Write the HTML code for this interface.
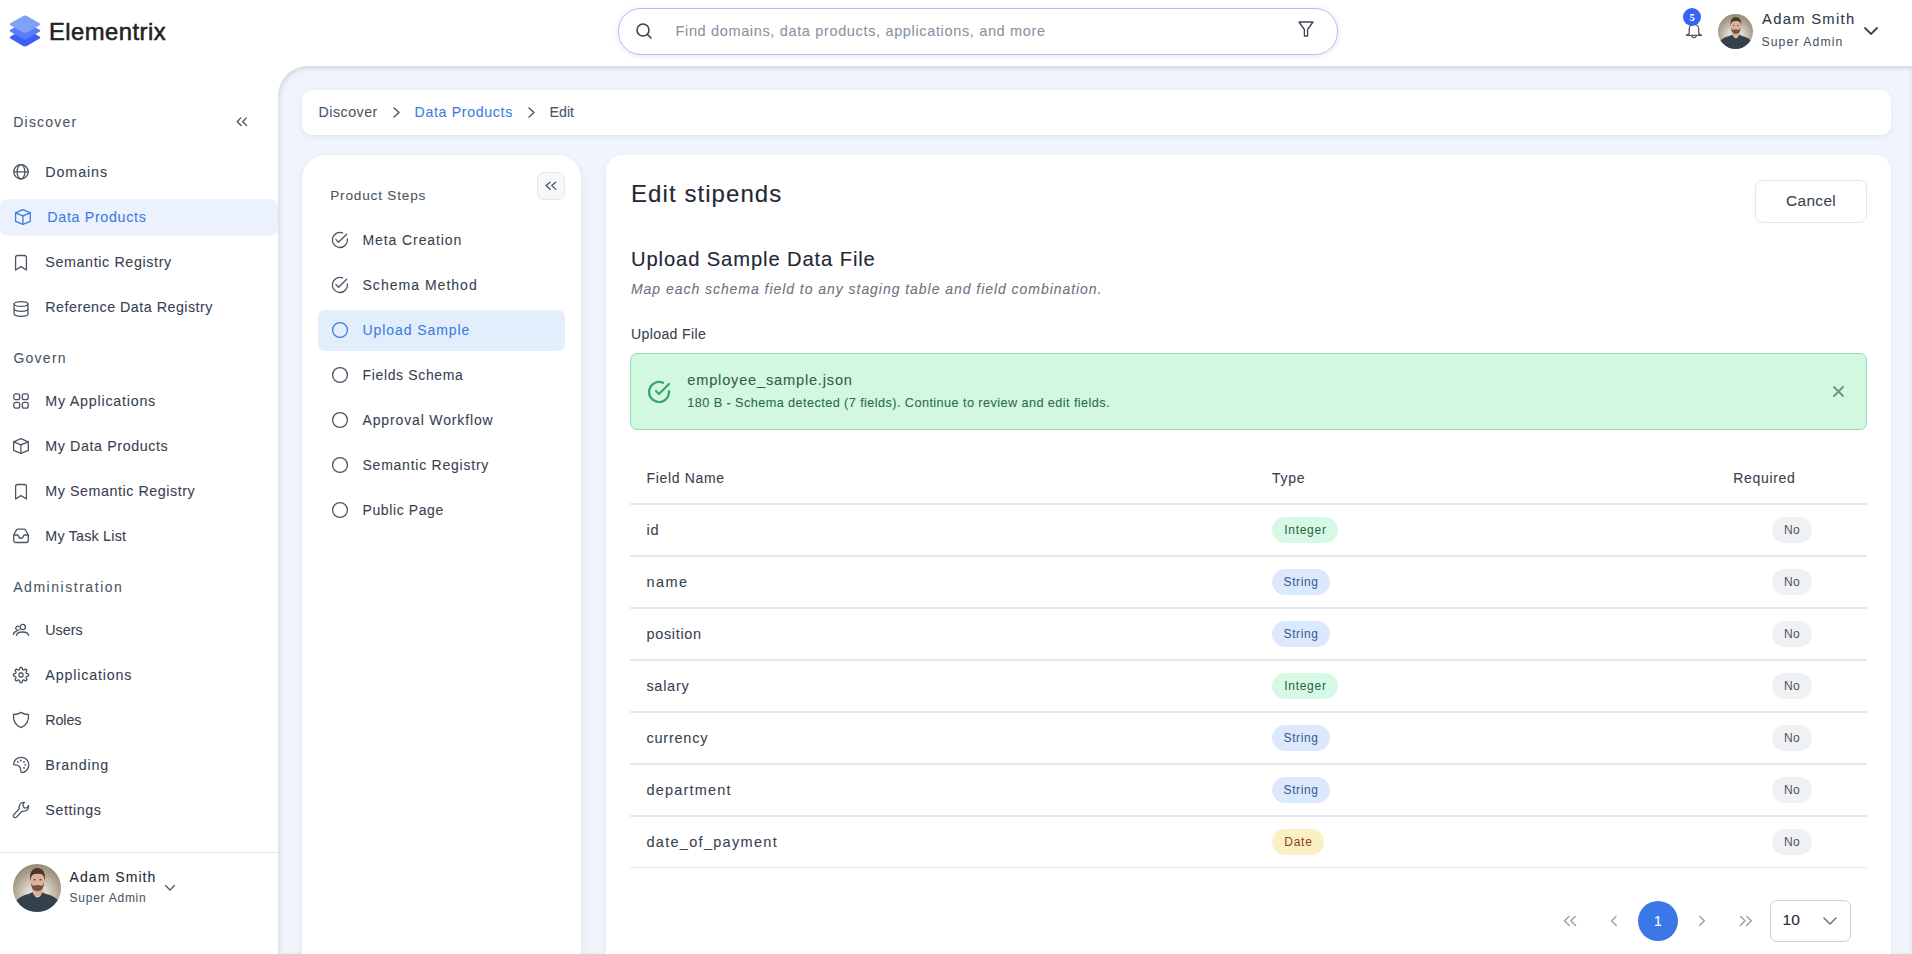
<!DOCTYPE html>
<html><head><meta charset="utf-8">
<style>
*{box-sizing:border-box;margin:0;padding:0}
html,body{width:1912px;height:954px;overflow:hidden;background:#fff;font-family:"Liberation Sans",sans-serif;color:#374151}
.abs{position:absolute}
.t{position:absolute;white-space:nowrap;line-height:1;-webkit-text-stroke:0.08px currentColor}
</style></head><body>

<div class="abs" style="left:278px;top:66px;width:1634px;height:888px;background:#f0f4fc;border-top-left-radius:30px;box-shadow:inset 1px 2px 5px rgba(40,50,80,.16)"></div>
<svg class="abs" style="left:9px;top:15px;overflow:visible" width="32" height="32" viewBox="0 0 32 32"><path transform="translate(0 13.4)" d="M13.6 1.2 Q16 -0.2 18.4 1.2 L30.6 8.2 Q32 9.2 30.6 10.2 L18.4 17.3 Q16 18.7 13.6 17.3 L1.4 10.2 Q0 9.2 1.4 8.2 Z" fill="#3e5ef5"/><path transform="translate(0 6.5)" d="M13.6 1.2 Q16 -0.2 18.4 1.2 L30.6 8.2 Q32 9.2 30.6 10.2 L18.4 17.3 Q16 18.7 13.6 17.3 L1.4 10.2 Q0 9.2 1.4 8.2 Z" fill="#5b7cf6"/><path transform="translate(0 0)" d="M13.6 1.2 Q16 -0.2 18.4 1.2 L30.6 8.2 Q32 9.2 30.6 10.2 L18.4 17.3 Q16 18.7 13.6 17.3 L1.4 10.2 Q0 9.2 1.4 8.2 Z" fill="#80a1f8"/></svg>
<div class="t" style="left:49.00px;top:20.45px;font-size:23.8px;letter-spacing:0.474px;color:#222;font-weight:400;font-style:normal;-webkit-text-stroke:0.55px #222;">Elementrix</div>
<div class="abs" style="left:618px;top:8px;width:720px;height:47px;border:1px solid #c4b5fb;border-radius:23px;background:#fff;box-shadow:0 1px 6px rgba(0,0,0,.10)"></div>
<svg class="abs" style="left:636px;top:23px;overflow:visible" width="16" height="16" viewBox="0 0 16 16" fill="none" stroke="#374151" stroke-width="1.6" stroke-linecap="round" stroke-linejoin="round" ><circle cx="7" cy="7" r="6"/><path d="M11.5 11.5 L15 15"/></svg>
<div class="t" style="left:675.50px;top:23.53px;font-size:14.5px;letter-spacing:0.652px;color:#8a91a3;font-weight:400;font-style:normal;">Find domains, data products, applications, and more</div>
<svg class="abs" style="left:1297.5px;top:21px;overflow:visible" width="16" height="16" viewBox="0 0 16 16" fill="none" stroke="#3f4652" stroke-width="1.3" stroke-linecap="round" stroke-linejoin="round" ><path d="M1 1 H15 L9.6 8.5 V15 H6.4 V8.5 Z"/></svg>
<svg class="abs" style="left:1686px;top:24px;overflow:visible" width="16" height="15" viewBox="0 0 16 15" fill="none" stroke="#4b5563" stroke-width="1.25" stroke-linecap="round" stroke-linejoin="round" ><path d="M3.2 9.6 V5 C3.2 2.2 5.3 0.4 8 0.4 C10.7 0.4 12.7 2.2 12.7 5 V9.6 L15.5 11.4 H0.4 Z"/><path d="M5.6 11.6 Q6 13.7 8 13.7 Q10 13.7 10.4 11.6"/></svg>
<div class="abs" style="left:1683px;top:8px;width:18px;height:18px;background:#3563f5;border-radius:50%"></div>
<div class="t" style="left:1689.50px;top:12.91px;font-size:10.5px;letter-spacing:0.000px;color:#fff;font-weight:700;font-style:normal;font-family:'Liberation Serif',serif;">5</div>
<div class="abs" style="left:1718px;top:14px;width:35px;height:35px;border-radius:50%;overflow:hidden;background:radial-gradient(circle at 50% 64%,#f3f0ec 0%,#dcd5cb 28%,#aa9d8c 62%,#7f705f 100%)">
<svg width="35" height="35" viewBox="0 0 48 48" style="position:absolute;left:0;top:0">
<path d="M19 20 L19.5 30 Q24 35 29.5 30 L30 20 Z" fill="#d9ae9a"/>
<path d="M2 38.5 Q6 32 15.5 30 L19.5 28.3 Q21.5 33 24.5 33.5 Q27.5 33 29.5 28.3 L33 30 Q43 32 46.5 38.5 L48 48 L0 48 Z" fill="#34414a"/>
<ellipse cx="24.5" cy="16.5" rx="6.8" ry="9" fill="#dcb19e"/>
<path d="M17.2 17 Q15.8 4.5 24.5 4 Q33 4.5 31.9 17 Q31.2 10.5 28 10 Q25 9.3 22 10 Q18 10.2 17.2 17 Z" fill="#4d362a"/>
<path d="M17.8 18 Q18 27.2 24.5 27.2 Q31 27.2 31.2 18 Q30 22.2 28.2 21.8 Q24.5 20.2 20.8 21.8 Q19 22.2 17.8 18 Z" fill="#75503e"/>
<ellipse cx="21.6" cy="15.8" rx="1" ry="0.7" fill="#3a2a22"/><ellipse cx="27.4" cy="15.8" rx="1" ry="0.7" fill="#3a2a22"/>
<ellipse cx="24.5" cy="23" rx="1.8" ry="0.7" fill="#9a5a50"/>
</svg></div>
<div class="t" style="left:1762.00px;top:12.47px;font-size:14.8px;letter-spacing:1.289px;color:#2d3748;font-weight:400;font-style:normal;">Adam Smith</div>
<div class="t" style="left:1761.50px;top:36.47px;font-size:12.2px;letter-spacing:1.104px;color:#4a5568;font-weight:400;font-style:normal;">Super Admin</div>
<svg class="abs" style="left:1864px;top:27px;overflow:visible" width="14" height="8" viewBox="0 0 14 8" fill="none" stroke="#3f4652" stroke-width="1.8" stroke-linecap="round" stroke-linejoin="round" ><path d="M1 1 L7 7 L13 1"/></svg>
<div class="t" style="left:13.20px;top:115.15px;font-size:14px;letter-spacing:1.234px;color:#4b5563;font-weight:400;font-style:normal;">Discover</div>
<svg class="abs" style="left:236px;top:117px;overflow:visible" width="12" height="10" viewBox="0 0 12 10" fill="none" stroke="#4b5563" stroke-width="1.35" stroke-linecap="round" stroke-linejoin="round" ><path d="M4.8 0.9 L1.2 4.8 L5.1 8.6"/><path d="M10.3 0.9 L6.7 4.8 L10.6 8.6"/></svg>
<div class="abs" style="left:0px;top:199px;width:278px;height:37px;background:#ebf2fd;border-radius:8px"></div>
<svg class="abs" style="left:13px;top:164px;overflow:visible" width="16" height="16" viewBox="0 0 16 16" fill="none" stroke="#4b5563" stroke-width="1.3" stroke-linecap="round" stroke-linejoin="round" ><circle cx="8" cy="7.8" r="7.2"/><ellipse cx="8" cy="7.8" rx="3.9" ry="7.2"/><path d="M0.8 7.8 H15.2"/></svg>
<div class="t" style="left:45.30px;top:164.90px;font-size:14.3px;letter-spacing:0.895px;color:#374151;font-weight:400;font-style:normal;">Domains</div>
<svg class="abs" style="left:15px;top:209px;overflow:visible" width="16" height="16" viewBox="0 0 16 16" fill="none" stroke="#3b7ddd" stroke-width="1.3" stroke-linecap="round" stroke-linejoin="round" ><path d="M7.9 0.6 L15.3 3.8 V12.3 L7.9 15.3 L0.6 12.3 V3.8 Z"/><path d="M0.6 3.8 L7.9 6.9 L15.3 3.8"/><path d="M7.9 6.9 V15.3"/></svg>
<div class="t" style="left:47.30px;top:209.90px;font-size:14.3px;letter-spacing:0.658px;color:#3b7ddd;font-weight:400;font-style:normal;">Data Products</div>
<svg class="abs" style="left:13px;top:254px;overflow:visible" width="16" height="16" viewBox="0 0 16 16" fill="none" stroke="#4b5563" stroke-width="1.3" stroke-linecap="round" stroke-linejoin="round" ><path d="M2.6 16 V3.5 Q2.6 1.5 4.6 1.5 H11.4 Q13.4 1.5 13.4 3.5 V16 L8 12.6 Z"/></svg>
<div class="t" style="left:45.30px;top:254.90px;font-size:14.3px;letter-spacing:0.617px;color:#374151;font-weight:400;font-style:normal;">Semantic Registry</div>
<svg class="abs" style="left:13px;top:299.5px;overflow:visible" width="16" height="16" viewBox="0 0 16 16" fill="none" stroke="#4b5563" stroke-width="1.3" stroke-linecap="round" stroke-linejoin="round" ><ellipse cx="8" cy="4" rx="6.9" ry="2.4"/><path d="M1.1 4 V14 A6.9 2.3 0 0 0 14.9 14 V4"/><path d="M1.1 9.1 A6.9 2.3 0 0 0 14.9 9.1"/></svg>
<div class="t" style="left:45.30px;top:299.90px;font-size:14.3px;letter-spacing:0.483px;color:#374151;font-weight:400;font-style:normal;">Reference Data Registry</div>
<div class="t" style="left:13.40px;top:350.95px;font-size:14px;letter-spacing:1.259px;color:#4b5563;font-weight:400;font-style:normal;">Govern</div>
<svg class="abs" style="left:13px;top:393px;overflow:visible" width="16" height="16" viewBox="0 0 16 16" fill="none" stroke="#4b5563" stroke-width="1.3" stroke-linecap="round" stroke-linejoin="round" ><rect x="0.8" y="0.8" width="5.9" height="5.9" rx="2"/><rect x="9.3" y="0.8" width="5.9" height="5.9" rx="2"/><rect x="0.8" y="9.3" width="5.9" height="5.9" rx="2"/><rect x="9.3" y="9.3" width="5.9" height="5.9" rx="2"/></svg>
<div class="t" style="left:45.30px;top:393.90px;font-size:14.3px;letter-spacing:0.760px;color:#374151;font-weight:400;font-style:normal;">My Applications</div>
<svg class="abs" style="left:13px;top:438px;overflow:visible" width="16" height="16" viewBox="0 0 16 16" fill="none" stroke="#4b5563" stroke-width="1.3" stroke-linecap="round" stroke-linejoin="round" ><path d="M7.9 0.6 L15.3 3.8 V12.3 L7.9 15.3 L0.6 12.3 V3.8 Z"/><path d="M0.6 3.8 L7.9 6.9 L15.3 3.8"/><path d="M7.9 6.9 V15.3"/></svg>
<div class="t" style="left:45.30px;top:438.90px;font-size:14.3px;letter-spacing:0.584px;color:#374151;font-weight:400;font-style:normal;">My Data Products</div>
<svg class="abs" style="left:13px;top:483px;overflow:visible" width="16" height="16" viewBox="0 0 16 16" fill="none" stroke="#4b5563" stroke-width="1.3" stroke-linecap="round" stroke-linejoin="round" ><path d="M2.6 16 V3.5 Q2.6 1.5 4.6 1.5 H11.4 Q13.4 1.5 13.4 3.5 V16 L8 12.6 Z"/></svg>
<div class="t" style="left:45.30px;top:483.90px;font-size:14.3px;letter-spacing:0.549px;color:#374151;font-weight:400;font-style:normal;">My Semantic Registry</div>
<svg class="abs" style="left:13px;top:528px;overflow:visible" width="16" height="16" viewBox="0 0 16 16" fill="none" stroke="#4b5563" stroke-width="1.3" stroke-linecap="round" stroke-linejoin="round" ><path d="M0.7 7 L3.6 1.8 Q4 1.2 4.8 1.2 H11.2 Q12 1.2 12.4 1.8 L15.3 7 V12.5 Q15.3 14.5 13.3 14.5 H2.7 Q0.7 14.5 0.7 12.5 Z"/><path d="M0.7 7 H4.4 Q5.1 7 5.3 7.7 Q6 10.3 8 10.3 Q10 10.3 10.7 7.7 Q10.9 7 11.6 7 H15.3"/></svg>
<div class="t" style="left:45.30px;top:528.90px;font-size:14.3px;letter-spacing:0.208px;color:#374151;font-weight:400;font-style:normal;">My Task List</div>
<div class="t" style="left:13.20px;top:580.15px;font-size:14px;letter-spacing:1.538px;color:#4b5563;font-weight:400;font-style:normal;">Administration</div>
<svg class="abs" style="left:13px;top:622px;overflow:visible" width="16" height="16" viewBox="0 0 16 16" fill="none" stroke="#4b5563" stroke-width="1.3" stroke-linecap="round" stroke-linejoin="round" ><circle cx="9.8" cy="5" r="2.6"/><path d="M3.5 13.3 C3.8 10.8 6 10 9.7 10 C13.4 10 15.2 10.8 15.5 13.3"/><path d="M5.9 4.6 A2 2 0 1 0 6.2 7.6"/><path d="M0.4 12.4 C0.8 10.5 2 9.6 3.6 9.4"/></svg>
<div class="t" style="left:45.30px;top:622.90px;font-size:14.3px;letter-spacing:-0.009px;color:#374151;font-weight:400;font-style:normal;">Users</div>
<svg class="abs" style="left:13px;top:667px;overflow:visible" width="16" height="16" viewBox="0 0 16 16" fill="none" stroke="#4b5563" stroke-width="1.3" stroke-linecap="round" stroke-linejoin="round" ><path d="M6.44 2.62 L7.05 0.46 L8.95 0.46 L9.56 2.62 L10.70 3.09 L12.66 1.99 L14.01 3.34 L12.91 5.30 L13.38 6.44 L15.54 7.05 L15.54 8.95 L13.38 9.56 L12.91 10.70 L14.01 12.66 L12.66 14.01 L10.70 12.91 L9.56 13.38 L8.95 15.54 L7.05 15.54 L6.44 13.38 L5.30 12.91 L3.34 14.01 L1.99 12.66 L3.09 10.70 L2.62 9.56 L0.46 8.95 L0.46 7.05 L2.62 6.44 L3.09 5.30 L1.99 3.34 L3.34 1.99 L5.30 3.09Z"/><rect x="6" y="6" width="4" height="4" rx="1.3"/></svg>
<div class="t" style="left:45.30px;top:667.90px;font-size:14.3px;letter-spacing:0.818px;color:#374151;font-weight:400;font-style:normal;">Applications</div>
<svg class="abs" style="left:13px;top:712px;overflow:visible" width="16" height="16" viewBox="0 0 16 16" fill="none" stroke="#4b5563" stroke-width="1.3" stroke-linecap="round" stroke-linejoin="round" ><path d="M8 0.4 C10.3 1.9 12.8 2.6 15.5 2.5 C16 8.6 13.2 13.5 8 15.6 C2.8 13.5 0 8.6 0.5 2.5 C3.2 2.6 5.7 1.9 8 0.4 Z"/></svg>
<div class="t" style="left:45.30px;top:712.90px;font-size:14.3px;letter-spacing:-0.116px;color:#374151;font-weight:400;font-style:normal;">Roles</div>
<svg class="abs" style="left:13px;top:757px;overflow:visible" width="16" height="16" viewBox="0 0 16 16" fill="none" stroke="#4b5563" stroke-width="1.3" stroke-linecap="round" stroke-linejoin="round" ><path d="M0.6 7.4 C0.8 3.2 4 0.3 8 0.3 C12.5 0.3 15.8 3.6 15.8 7.8 C15.8 12 12.5 15.6 8.8 15.6 C7.8 15.6 8 14.5 7.8 13 C7.5 9.5 5.5 8 2 7.9 C1 7.9 0.6 7.7 0.6 7.4 Z"/><g fill="#4b5563" stroke="none"><circle cx="4.8" cy="4.9" r="0.9"/><circle cx="7.9" cy="3.5" r="0.9"/><circle cx="11" cy="4.9" r="0.9"/><circle cx="12.3" cy="7.9" r="0.9"/><circle cx="11" cy="10.9" r="0.9"/></g></svg>
<div class="t" style="left:45.30px;top:757.90px;font-size:14.3px;letter-spacing:0.822px;color:#374151;font-weight:400;font-style:normal;">Branding</div>
<svg class="abs" style="left:13px;top:802px;overflow:visible" width="16" height="16" viewBox="0 0 16 16" fill="none" stroke="#4b5563" stroke-width="1.3" stroke-linecap="round" stroke-linejoin="round" ><path d="M6.2 6.9 C5.5 4 7 0.8 10.3 0.4 L11.5 0.4 L10.3 1.8 C9.4 3.6 10.6 6 12.5 6.2 C13.6 6.3 14.6 5.6 15.5 3.6 L15.6 4.5 C15.7 8 13 9.6 9.1 9.3 L3.5 15.1 C2.8 15.8 1.4 15.6 0.8 15 C0.2 14.3 0.2 13.2 0.9 12.5 Z"/></svg>
<div class="t" style="left:45.30px;top:802.90px;font-size:14.3px;letter-spacing:0.548px;color:#374151;font-weight:400;font-style:normal;">Settings</div>
<div class="abs" style="left:0px;top:852px;width:278px;height:1px;background:#e3e6ec"></div>
<div class="abs" style="left:13px;top:864px;width:48px;height:48px;border-radius:50%;overflow:hidden;background:radial-gradient(circle at 50% 64%,#f3f0ec 0%,#dcd5cb 28%,#aa9d8c 62%,#7f705f 100%)">
<svg width="48" height="48" viewBox="0 0 48 48" style="position:absolute;left:0;top:0">
<path d="M19 20 L19.5 30 Q24 35 29.5 30 L30 20 Z" fill="#d9ae9a"/>
<path d="M2 38.5 Q6 32 15.5 30 L19.5 28.3 Q21.5 33 24.5 33.5 Q27.5 33 29.5 28.3 L33 30 Q43 32 46.5 38.5 L48 48 L0 48 Z" fill="#34414a"/>
<ellipse cx="24.5" cy="16.5" rx="6.8" ry="9" fill="#dcb19e"/>
<path d="M17.2 17 Q15.8 4.5 24.5 4 Q33 4.5 31.9 17 Q31.2 10.5 28 10 Q25 9.3 22 10 Q18 10.2 17.2 17 Z" fill="#4d362a"/>
<path d="M17.8 18 Q18 27.2 24.5 27.2 Q31 27.2 31.2 18 Q30 22.2 28.2 21.8 Q24.5 20.2 20.8 21.8 Q19 22.2 17.8 18 Z" fill="#75503e"/>
<ellipse cx="21.6" cy="15.8" rx="1" ry="0.7" fill="#3a2a22"/><ellipse cx="27.4" cy="15.8" rx="1" ry="0.7" fill="#3a2a22"/>
<ellipse cx="24.5" cy="23" rx="1.8" ry="0.7" fill="#9a5a50"/>
</svg></div>
<div class="t" style="left:69.60px;top:870.15px;font-size:14px;letter-spacing:1.051px;color:#1f2937;font-weight:400;font-style:normal;">Adam Smith</div>
<div class="t" style="left:69.60px;top:891.84px;font-size:12px;letter-spacing:0.739px;color:#4b5563;font-weight:400;font-style:normal;">Super Admin</div>
<svg class="abs" style="left:165px;top:885px;overflow:visible" width="10" height="6" viewBox="0 0 10 6" fill="none" stroke="#4b5563" stroke-width="1.3" stroke-linecap="round" stroke-linejoin="round" ><path d="M0.5 0.5 L5 5 L9.5 0.5"/></svg>
<div class="abs" style="left:302px;top:90px;width:1589px;height:45px;background:#fff;border-radius:10px;box-shadow:0 2px 6px rgba(30,40,80,.07)"></div>
<div class="t" style="left:318.50px;top:105.18px;font-size:14.2px;letter-spacing:0.523px;color:#4b5563;font-weight:400;font-style:normal;">Discover</div>
<svg class="abs" style="left:393px;top:107px;overflow:visible" width="7" height="11" viewBox="0 0 7 11" fill="none" stroke="#4b5563" stroke-width="1.4" stroke-linecap="round" stroke-linejoin="round" ><path d="M1 1 L6 5.5 L1 10"/></svg>
<div class="t" style="left:414.60px;top:105.18px;font-size:14.2px;letter-spacing:0.644px;color:#3b7ddd;font-weight:400;font-style:normal;">Data Products</div>
<svg class="abs" style="left:528px;top:107px;overflow:visible" width="7" height="11" viewBox="0 0 7 11" fill="none" stroke="#4b5563" stroke-width="1.4" stroke-linecap="round" stroke-linejoin="round" ><path d="M1 1 L6 5.5 L1 10"/></svg>
<div class="t" style="left:549.50px;top:105.18px;font-size:14.2px;letter-spacing:0.011px;color:#4b5563;font-weight:400;font-style:normal;">Edit</div>
<div class="abs" style="left:302px;top:155px;width:279px;height:820px;background:#fff;border-radius:24px;box-shadow:0 3px 10px rgba(30,40,80,.08)"></div>
<div class="abs" style="left:537px;top:172px;width:28px;height:28px;background:#f6f7f9;border:1px solid #e4e6ea;border-radius:7px"></div>
<svg class="abs" style="left:545px;top:181px;overflow:visible" width="12" height="10" viewBox="0 0 12 10" fill="none" stroke="#4b5563" stroke-width="1.3" stroke-linecap="round" stroke-linejoin="round" ><path d="M5.1 1.2 L1.1 4.6 L5.3 8.4"/><path d="M10.6 1.2 L6.8 4.6 L10.8 8.4"/></svg>
<div class="t" style="left:330.20px;top:188.69px;font-size:13.6px;letter-spacing:0.815px;color:#4b5563;font-weight:400;font-style:normal;">Product Steps</div>
<div class="abs" style="left:318px;top:310px;width:247px;height:41px;background:#e3eefc;border-radius:7px"></div>
<svg class="abs" style="left:332px;top:232px;overflow:visible" width="16" height="16" viewBox="0 0 16 16" fill="none" stroke="#4b5563" stroke-width="1.3" stroke-linecap="round" stroke-linejoin="round" ><path d="M10.6 0.9 A7.55 7.55 0 1 0 15.4 6.9"/><path d="M3.8 7.4 L6.5 10.3 L14.7 2.2"/></svg>
<div class="t" style="left:362.50px;top:233.35px;font-size:14px;letter-spacing:0.906px;color:#374151;font-weight:400;font-style:normal;">Meta Creation</div>
<svg class="abs" style="left:332px;top:277px;overflow:visible" width="16" height="16" viewBox="0 0 16 16" fill="none" stroke="#4b5563" stroke-width="1.3" stroke-linecap="round" stroke-linejoin="round" ><path d="M10.6 0.9 A7.55 7.55 0 1 0 15.4 6.9"/><path d="M3.8 7.4 L6.5 10.3 L14.7 2.2"/></svg>
<div class="t" style="left:362.50px;top:278.35px;font-size:14px;letter-spacing:1.021px;color:#374151;font-weight:400;font-style:normal;">Schema Method</div>
<svg class="abs" style="left:332px;top:322px;overflow:visible" width="16" height="16" viewBox="0 0 16 16" fill="none" stroke="#3b7ddd" stroke-width="1.3" stroke-linecap="round" stroke-linejoin="round" ><circle cx="8" cy="8" r="7.4"/></svg>
<div class="t" style="left:362.50px;top:323.35px;font-size:14px;letter-spacing:0.924px;color:#3b7ddd;font-weight:400;font-style:normal;">Upload Sample</div>
<svg class="abs" style="left:332px;top:367px;overflow:visible" width="16" height="16" viewBox="0 0 16 16" fill="none" stroke="#4b5563" stroke-width="1.3" stroke-linecap="round" stroke-linejoin="round" ><circle cx="8" cy="8" r="7.4"/></svg>
<div class="t" style="left:362.50px;top:368.35px;font-size:14px;letter-spacing:0.649px;color:#374151;font-weight:400;font-style:normal;">Fields Schema</div>
<svg class="abs" style="left:332px;top:412px;overflow:visible" width="16" height="16" viewBox="0 0 16 16" fill="none" stroke="#4b5563" stroke-width="1.3" stroke-linecap="round" stroke-linejoin="round" ><circle cx="8" cy="8" r="7.4"/></svg>
<div class="t" style="left:362.50px;top:413.35px;font-size:14px;letter-spacing:0.857px;color:#374151;font-weight:400;font-style:normal;">Approval Workflow</div>
<svg class="abs" style="left:332px;top:457px;overflow:visible" width="16" height="16" viewBox="0 0 16 16" fill="none" stroke="#4b5563" stroke-width="1.3" stroke-linecap="round" stroke-linejoin="round" ><circle cx="8" cy="8" r="7.4"/></svg>
<div class="t" style="left:362.50px;top:458.35px;font-size:14px;letter-spacing:0.763px;color:#374151;font-weight:400;font-style:normal;">Semantic Registry</div>
<svg class="abs" style="left:332px;top:502px;overflow:visible" width="16" height="16" viewBox="0 0 16 16" fill="none" stroke="#4b5563" stroke-width="1.3" stroke-linecap="round" stroke-linejoin="round" ><circle cx="8" cy="8" r="7.4"/></svg>
<div class="t" style="left:362.50px;top:503.35px;font-size:14px;letter-spacing:0.608px;color:#374151;font-weight:400;font-style:normal;">Public Page</div>
<div class="abs" style="left:606px;top:155px;width:1285px;height:820px;background:#fff;border-radius:16px;box-shadow:0 2px 6px rgba(30,40,80,.05)"></div>
<div class="t" style="left:631.00px;top:181.68px;font-size:24px;letter-spacing:1.073px;color:#1f2937;font-weight:400;font-style:normal;-webkit-text-stroke:0.15px #1f2937;">Edit stipends</div>
<div class="abs" style="left:1755px;top:180px;width:112px;height:43px;background:#fff;border:1px solid #e5e7eb;border-radius:7px"></div>
<div class="t" style="left:1786.00px;top:193.36px;font-size:15.4px;letter-spacing:0.372px;color:#3a4350;font-weight:400;font-style:normal;">Cancel</div>
<div class="t" style="left:631.00px;top:248.70px;font-size:20.2px;letter-spacing:0.883px;color:#1f2937;font-weight:400;font-style:normal;-webkit-text-stroke:0.15px #1f2937;">Upload Sample Data File</div>
<div class="t" style="left:631.00px;top:281.75px;font-size:14px;letter-spacing:0.955px;color:#6b7280;font-weight:400;font-style:italic;">Map each schema field to any staging table and field combination.</div>
<div class="t" style="left:631.00px;top:326.96px;font-size:14.1px;letter-spacing:0.348px;color:#374151;font-weight:400;font-style:normal;">Upload File</div>
<div class="abs" style="left:630px;top:353px;width:1237px;height:77px;background:#d3f8e2;border:1px solid #8fe3a9;border-radius:7px"></div>
<svg class="abs" style="left:647px;top:380px;overflow:visible" width="24" height="24" viewBox="0 0 24 24" fill="none" stroke="#3ba66b" stroke-width="2.2" stroke-linecap="round" stroke-linejoin="round" ><path d="M22 11.08V12a10 10 0 1 1-5.93-9.14"/><path d="M22 4 12 14.01l-3-3"/></svg>
<div class="t" style="left:687.30px;top:372.64px;font-size:14.6px;letter-spacing:0.809px;color:#2f5f45;font-weight:400;font-style:normal;">employee_sample.json</div>
<div class="t" style="left:687.30px;top:397.15px;font-size:12.7px;letter-spacing:0.421px;color:#2a6b48;font-weight:400;font-style:normal;">180 B - Schema detected (7 fields). Continue to review and edit fields.</div>
<svg class="abs" style="left:1833px;top:386px;overflow:visible" width="11" height="11" viewBox="0 0 11 11" fill="none" stroke="#6b9b7b" stroke-width="2" stroke-linecap="round" stroke-linejoin="round" ><path d="M1 1 L10 10 M10 1 L1 10"/></svg>
<div class="t" style="left:646.60px;top:471.15px;font-size:14px;letter-spacing:0.646px;color:#374151;font-weight:400;font-style:normal;">Field Name</div>
<div class="t" style="left:1272.10px;top:471.15px;font-size:14px;letter-spacing:0.716px;color:#374151;font-weight:400;font-style:normal;">Type</div>
<div class="t" style="left:1733.20px;top:471.15px;font-size:14px;letter-spacing:0.684px;color:#374151;font-weight:400;font-style:normal;">Required</div>
<div class="abs" style="left:630px;top:503px;width:1237px;height:2px;background:#e2e7f0"></div>
<div class="abs" style="left:630px;top:555px;width:1237px;height:2px;background:#e2e7f0"></div>
<div class="abs" style="left:630px;top:607px;width:1237px;height:2px;background:#e2e7f0"></div>
<div class="abs" style="left:630px;top:659px;width:1237px;height:2px;background:#e2e7f0"></div>
<div class="abs" style="left:630px;top:711px;width:1237px;height:2px;background:#e2e7f0"></div>
<div class="abs" style="left:630px;top:763px;width:1237px;height:2px;background:#e2e7f0"></div>
<div class="abs" style="left:630px;top:815px;width:1237px;height:2px;background:#e2e7f0"></div>
<div class="abs" style="left:630px;top:867px;width:1237px;height:1px;background:#e2e7f0"></div>
<div class="t" style="left:646.40px;top:522.83px;font-size:14.5px;letter-spacing:0.819px;color:#374151;font-weight:400;font-style:normal;">id</div>
<div class="abs" style="left:1272px;top:517px;width:66px;height:26px;background:#d5f9e4;border-radius:13px"></div>
<div class="t" style="left:1284.20px;top:523.94px;font-size:12px;letter-spacing:0.724px;color:#2b6246;font-weight:400;font-style:normal;-webkit-text-stroke:0;">Integer</div>
<div class="abs" style="left:1772px;top:517px;width:40px;height:26px;background:#f0f1f3;border-radius:13px"></div>
<div class="t" style="left:1784.00px;top:523.94px;font-size:12px;letter-spacing:0.364px;color:#4b5563;font-weight:400;font-style:normal;-webkit-text-stroke:0;">No</div>
<div class="t" style="left:646.40px;top:574.83px;font-size:14.5px;letter-spacing:1.479px;color:#374151;font-weight:400;font-style:normal;">name</div>
<div class="abs" style="left:1272px;top:569px;width:58px;height:26px;background:#dce8fb;border-radius:13px"></div>
<div class="t" style="left:1283.50px;top:575.94px;font-size:12px;letter-spacing:0.631px;color:#34598f;font-weight:400;font-style:normal;-webkit-text-stroke:0;">String</div>
<div class="abs" style="left:1772px;top:569px;width:40px;height:26px;background:#f0f1f3;border-radius:13px"></div>
<div class="t" style="left:1784.00px;top:575.94px;font-size:12px;letter-spacing:0.364px;color:#4b5563;font-weight:400;font-style:normal;-webkit-text-stroke:0;">No</div>
<div class="t" style="left:646.40px;top:626.83px;font-size:14.5px;letter-spacing:0.688px;color:#374151;font-weight:400;font-style:normal;">position</div>
<div class="abs" style="left:1272px;top:621px;width:58px;height:26px;background:#dce8fb;border-radius:13px"></div>
<div class="t" style="left:1283.50px;top:627.94px;font-size:12px;letter-spacing:0.631px;color:#34598f;font-weight:400;font-style:normal;-webkit-text-stroke:0;">String</div>
<div class="abs" style="left:1772px;top:621px;width:40px;height:26px;background:#f0f1f3;border-radius:13px"></div>
<div class="t" style="left:1784.00px;top:627.94px;font-size:12px;letter-spacing:0.364px;color:#4b5563;font-weight:400;font-style:normal;-webkit-text-stroke:0;">No</div>
<div class="t" style="left:646.40px;top:678.83px;font-size:14.5px;letter-spacing:0.723px;color:#374151;font-weight:400;font-style:normal;">salary</div>
<div class="abs" style="left:1272px;top:673px;width:66px;height:26px;background:#d5f9e4;border-radius:13px"></div>
<div class="t" style="left:1284.20px;top:679.94px;font-size:12px;letter-spacing:0.724px;color:#2b6246;font-weight:400;font-style:normal;-webkit-text-stroke:0;">Integer</div>
<div class="abs" style="left:1772px;top:673px;width:40px;height:26px;background:#f0f1f3;border-radius:13px"></div>
<div class="t" style="left:1784.00px;top:679.94px;font-size:12px;letter-spacing:0.364px;color:#4b5563;font-weight:400;font-style:normal;-webkit-text-stroke:0;">No</div>
<div class="t" style="left:646.40px;top:730.83px;font-size:14.5px;letter-spacing:0.785px;color:#374151;font-weight:400;font-style:normal;">currency</div>
<div class="abs" style="left:1272px;top:725px;width:58px;height:26px;background:#dce8fb;border-radius:13px"></div>
<div class="t" style="left:1283.50px;top:731.94px;font-size:12px;letter-spacing:0.631px;color:#34598f;font-weight:400;font-style:normal;-webkit-text-stroke:0;">String</div>
<div class="abs" style="left:1772px;top:725px;width:40px;height:26px;background:#f0f1f3;border-radius:13px"></div>
<div class="t" style="left:1784.00px;top:731.94px;font-size:12px;letter-spacing:0.364px;color:#4b5563;font-weight:400;font-style:normal;-webkit-text-stroke:0;">No</div>
<div class="t" style="left:646.40px;top:782.83px;font-size:14.5px;letter-spacing:1.194px;color:#374151;font-weight:400;font-style:normal;">department</div>
<div class="abs" style="left:1272px;top:777px;width:58px;height:26px;background:#dce8fb;border-radius:13px"></div>
<div class="t" style="left:1283.50px;top:783.94px;font-size:12px;letter-spacing:0.631px;color:#34598f;font-weight:400;font-style:normal;-webkit-text-stroke:0;">String</div>
<div class="abs" style="left:1772px;top:777px;width:40px;height:26px;background:#f0f1f3;border-radius:13px"></div>
<div class="t" style="left:1784.00px;top:783.94px;font-size:12px;letter-spacing:0.364px;color:#4b5563;font-weight:400;font-style:normal;-webkit-text-stroke:0;">No</div>
<div class="t" style="left:646.40px;top:834.83px;font-size:14.5px;letter-spacing:1.303px;color:#374151;font-weight:400;font-style:normal;">date_of_payment</div>
<div class="abs" style="left:1272px;top:829px;width:52px;height:26px;background:#fbf0c4;border-radius:13px"></div>
<div class="t" style="left:1284.30px;top:835.94px;font-size:12px;letter-spacing:0.719px;color:#8a4016;font-weight:400;font-style:normal;-webkit-text-stroke:0;">Date</div>
<div class="abs" style="left:1772px;top:829px;width:40px;height:26px;background:#f0f1f3;border-radius:13px"></div>
<div class="t" style="left:1784.00px;top:835.94px;font-size:12px;letter-spacing:0.364px;color:#4b5563;font-weight:400;font-style:normal;-webkit-text-stroke:0;">No</div>
<svg class="abs" style="left:1564px;top:916px;overflow:visible" width="12" height="10" viewBox="0 0 12 10" fill="none" stroke="#959eb0" stroke-width="1.4" stroke-linecap="round" stroke-linejoin="round" ><path d="M5 0.4 L0.5 4.8 L5.4 9.4"/><path d="M11.2 0.4 L6.8 4.8 L11.6 9.4"/></svg>
<svg class="abs" style="left:1611px;top:916px;overflow:visible" width="6" height="10" viewBox="0 0 6 10" fill="none" stroke="#959eb0" stroke-width="1.4" stroke-linecap="round" stroke-linejoin="round" ><path d="M5 0.4 L0.5 4.8 L5.2 9.4"/></svg>
<div class="abs" style="left:1638px;top:901px;width:40px;height:40px;background:#3b78e7;border-radius:50%"></div>
<div class="t" style="left:1654.00px;top:914.15px;font-size:14px;letter-spacing:0.000px;color:#fff;font-weight:400;font-style:normal;">1</div>
<svg class="abs" style="left:1699px;top:916px;overflow:visible" width="6" height="10" viewBox="0 0 6 10" fill="none" stroke="#959eb0" stroke-width="1.4" stroke-linecap="round" stroke-linejoin="round" ><path d="M0.8 0.4 L5.3 4.8 L0.6 9.4"/></svg>
<svg class="abs" style="left:1740px;top:916px;overflow:visible" width="12" height="10" viewBox="0 0 12 10" fill="none" stroke="#959eb0" stroke-width="1.4" stroke-linecap="round" stroke-linejoin="round" ><path d="M0.6 0.4 L5.1 4.8 L0.4 9.4"/><path d="M6.8 0.4 L11.3 4.8 L6.6 9.4"/></svg>
<div class="abs" style="left:1770px;top:900px;width:81px;height:42px;background:#fff;border:1px solid #c9d1df;border-radius:7px"></div>
<div class="t" style="left:1782.60px;top:912.38px;font-size:15.5px;letter-spacing:0.000px;color:#1f2937;font-weight:400;font-style:normal;">10</div>
<svg class="abs" style="left:1823px;top:917px;overflow:visible" width="14" height="8" viewBox="0 0 14 8" fill="none" stroke="#6b7280" stroke-width="1.5" stroke-linecap="round" stroke-linejoin="round" ><path d="M1 1 L7 7 L13 1"/></svg>
</body></html>
